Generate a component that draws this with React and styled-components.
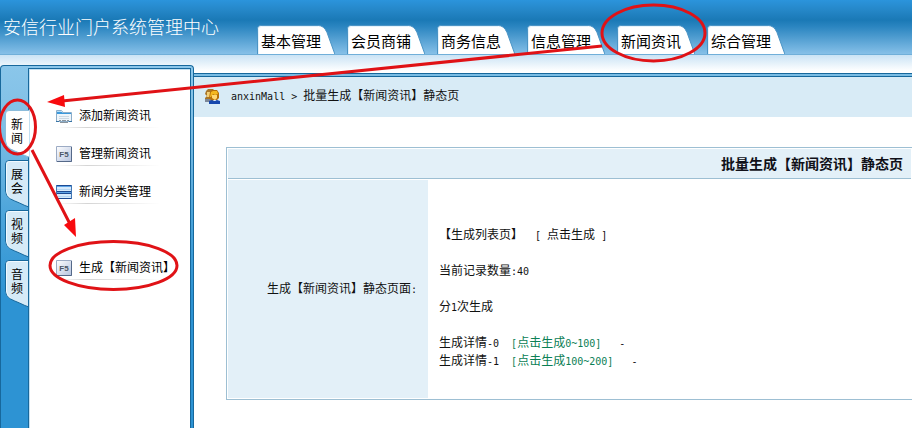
import React, { useState } from "react";
import styled, { createGlobalStyle } from "styled-components";

const GlobalStyle = createGlobalStyle`
  * {
    box-sizing: border-box;
  }
  body {
    margin: 0;
    overflow: hidden;
    background: #fff;
    color: #111;
    font: 12px/18px "Liberation Sans", "Noto Sans CJK SC", sans-serif;
  }
  button {
    margin: 0;
    padding: 0;
    border: none;
    background: none;
    color: inherit;
    font: inherit;
    cursor: pointer;
  }
  a {
    color: inherit;
    text-decoration: none;
  }
`;

const Page = styled.div`
  position: relative;
  display: flex;
  flex-direction: column;
  min-height: 100vh;
`;

const Header = styled.header`
  display: flex;
  align-items: flex-end;
  height: 55px;
  border-bottom: 1px solid #70afd9;
  background: linear-gradient(#2b94dc 0, #2587c8 10px, #1a79b6 20px, #2c86c1 27px, #86c0e8 54px);
`;

const Title = styled.h1`
  flex: none;
  width: 257px;
  margin: 0;
  padding: 0 0 12px 3px;
  color: #fff;
  font-size: 18px;
  font-weight: 300;
  line-height: 28px;
  white-space: nowrap;
`;

const TopNav = styled.nav`
  display: flex;
  gap: 12px;
`;

const TopTabButton = styled.button`
  position: relative;
  flex: none;
  width: 78px;
  height: 29px;
  padding: 4px 0 0 4px;
  color: #000;
  font-size: 15px;
  line-height: 24px;
  text-align: left;
  white-space: nowrap;
`;

const TabShape = styled.svg`
  position: absolute;
  top: 0;
  left: 0;
`;

const TabLabel = styled.span`
  position: relative;
`;

const Body = styled.div`
  display: flex;
  flex: 1;
  background: linear-gradient(#cae3f5 0, #fff 16px);
`;

const Sidebar = styled.aside`
  display: flex;
  flex: none;
  width: 194px;
  margin-top: 10px;
  padding: 2px 2px 0 0;
  border: 1px solid #17689c;
  border-bottom: none;
  border-radius: 4px 4px 0 0;
  background: linear-gradient(#8ac6ea 0, #7fbfe5 60px, #4ba4da 150px, #2d93d3 230px);
`;

const Rail = styled.div`
  display: flex;
  flex-direction: column;
  align-items: flex-end;
  gap: 2px;
  width: 27px;
  padding-top: 42px;
`;

const SideTabButton = styled.button`
  position: relative;
  z-index: ${(p) => (p.$active ? 1 : 0)};
  display: flex;
  justify-content: center;
  align-items: flex-start;
  width: 24px;
  height: 48px;
  margin-right: -1px;
  padding: 8px 6px 0 6px;
  color: #000;
  line-height: 14px;
`;

const SideLabel = styled.span`
  position: relative;
  width: 12px;
`;

const Panel = styled.div`
  position: relative;
  flex: 1;
  padding-top: 27px;
  border: 1px solid #17689c;
  border-bottom: none;
  background: #fff;
  box-shadow: inset 1px 1px #c3e0f2;
`;

const Menu = styled.ul`
  margin: 0;
  padding: 0 0 0 27px;
  list-style: none;
`;

const MenuItem = styled.li`
  height: 38px;
  margin-top: ${(p) => (p.$newGroup ? "38px" : "0")};
  background: linear-gradient(90deg, #fff, #d5d5d5 30%, #fff) 0 31px / 104px 1px no-repeat;
`;

const MenuLink = styled.a`
  display: flex;
  align-items: center;
  gap: 7px;
  height: 38px;
  padding-top: 1px;
  color: #000;
  white-space: nowrap;
`;

const Main = styled.main`
  flex: 1;
  min-width: 0;
  margin-top: 18px;
  border-top: 1px solid #17689c;
  background: #fff;
`;

const Crumbs = styled.div`
  display: flex;
  align-items: center;
  height: 43px;
  padding-left: 10px;
  border-top: 2px solid #7abce3;
  box-shadow: inset 0 1px #17689c;
  background: #d8ebf6;
  white-space: pre;
`;

const CrumbText = styled.span`
  padding-left: 10px;
`;

const Latin = styled.span`
  font-family: "DejaVu Sans Mono", monospace;
  font-size: 10px;
`;

const Table = styled.table`
  width: calc(100% - 32px);
  margin: 30px 0 0 32px;
  border: 1px solid #9dbfd3;
  border-right: none;
  border-collapse: separate;
  border-spacing: 1px;
`;

const HeadCell = styled.th`
  height: 30px;
  padding: 0 8px 0 0;
  border-bottom: 1px solid #9dbfd3;
  background: #e3f0f8;
  color: #101018;
  font-size: 14px;
  font-weight: 700;
  text-align: right;
`;

const LabelCell = styled.th`
  width: 200px;
  height: 218px;
  padding: 0 11px 0 0;
  background: #e3f0f8;
  font-weight: 400;
  text-align: right;
  white-space: nowrap;
`;

const ValueCell = styled.td`
  padding: 18px 10px 0;
  white-space: pre;
`;

const Line = styled.p`
  height: 18px;
  margin: 0 0 ${(p) => (p.$tight ? "0" : "18px")};
`;

const GreenLink = styled.a`
  color: #0b8055;
`;

const Marks = styled.svg`
  position: absolute;
  z-index: 2;
  top: 0;
  left: 0;
  pointer-events: none;
`;

const topTabs = ["基本管理", "会员商铺", "商务信息", "信息管理", "新闻资讯", "综合管理"];

const sideTabs = ["新闻", "展会", "视频", "音频"];

const menu = [
  { label: "添加新闻资讯", icon: "folder" },
  { label: "管理新闻资讯", icon: "key" },
  { label: "新闻分类管理", icon: "rows" },
  { label: "生成【新闻资讯】", icon: "key", newGroup: true },
];

const FolderIcon = () => (
  <svg width="16" height="16" viewBox="0 0 16 16" aria-hidden="true">
    <path d="M.5 13.500V2.500h5l1.500 2h8.500v9z" fill="#eef5fb" stroke="#8cadc9" />
    <path d="M1 4h5l1 1h8v1H1z" fill="#3b99dc" />
    <path d="M1 3h4v1H1z" fill="#b5def7" />
    <path d="M0 13.500h3m10 0h3" stroke="#3874a5" />
    <path d="M3 8.500h10M3 10.500h10" stroke="#ccd8e2" />
    <path d="M3 12.500h2m1 0h4m1 0h2M4 14.500h8" stroke="#8a949d" />
  </svg>
);

const KeyIcon = () => (
  <svg width="16" height="16" viewBox="0 0 16 16" aria-hidden="true">
    <defs>
      <linearGradient id="keyFace" x1="0" y1="0" x2="1" y2="1">
        <stop offset="0" stopColor="#fff" />
        <stop offset="1" stopColor="#b4c3df" />
      </linearGradient>
    </defs>
    <path d="M.5.5h15v15H.5z" fill="url(#keyFace)" stroke="#9cabc4" />
    <path d="M15.500 1v14.500H1" fill="none" stroke="#556989" />
    <text x="8" y="11" textAnchor="middle" fontFamily="Liberation Sans, sans-serif" fontSize="8" fontWeight="700" fill="#4b5666">
      F5
    </text>
  </svg>
);

const RowsIcon = () => (
  <svg width="16" height="16" viewBox="0 0 16 16" aria-hidden="true">
    <path d="M0 1h16v14H0z" fill="#d6eafc" />
    <path d="M0 1h16v2H0zM0 8h16v2H0z" fill="#5da3e6" />
    <path d="M0 1.500h16M0 7.500h16M0 9.500h16M0 14.500h16" stroke="#1c4a93" />
    <path d="M1 5.500h14M1 12.500h14" stroke="#b4d5f2" />
    <path d="M.5 1v14M15.500 1v14" stroke="#4377b4" />
  </svg>
);

const UsersIcon = () => (
  <svg width="17" height="17" viewBox="0 0 17 17" aria-hidden="true">
    <path d="M2 3 4 1h5l2 2v7l-3 4H1v-4l2-2-2-2z" fill="#a8762a" />
    <path d="M3 4h4v5H3z" fill="#f3cf76" />
    <path d="M1 11h6v3H1z" fill="#7c8798" />
    <path d="M6 4 8 2h5l2 3v5l-2 2H7L5 10z" fill="#b56f0a" />
    <path d="M7 4 9 3h4l1 3-3 1-2-1-2 3H6z" fill="#f4b820" />
    <path d="M8 7h5v3l-2 2-3-2z" fill="#ffd772" />
    <path d="M5 16v-3l3-1 2 1 3-1 3 1v3z" fill="#1748ad" />
    <path d="M10 12h2l-1 1z" fill="#fff" />
  </svg>
);

const icons = { folder: FolderIcon, key: KeyIcon, rows: RowsIcon };

const TopTab = ({ label }) => (
  <TopTabButton type="button">
    <TabShape width="78" height="29" viewBox="0 0 78 29" aria-hidden="true">
      <path d="M.5 30V4Q.5.500 4 .5h57q6 0 9 7l8 22" fill="#fff" stroke="#4b94c5" />
      <path d="M1.500 30V4q0-2.500 3-2.500H61" fill="none" stroke="#e4f2fb" />
    </TabShape>
    <TabLabel>{label}</TabLabel>
  </TopTabButton>
);

const SideTab = ({ label, active, onClick }) => (
  <SideTabButton type="button" $active={active} onClick={onClick}>
    <TabShape width="24" height="48" viewBox="0 0 24 48" aria-hidden="true">
      <path
        d="M24 .5H4Q.5.500.5 4v27q0 5 5 8 4 2 9 4 6 3 9.500 4"
        fill={active ? "#fff" : "#d5eaf7"}
        stroke={active ? "#8bbcdb" : "#17689c"}
      />
      {!active && <path d="M23 1.500H4.500q-3 0-3 3V31q0 4 4 7" fill="none" stroke="#f2faff" />}
    </TabShape>
    <SideLabel>{label}</SideLabel>
  </SideTabButton>
);

// red pen marks showing the order of the clicks
const GuideMarks = () => (
  <Marks width="912" height="428" viewBox="0 0 912 428" aria-hidden="true">
    <g fill="none" stroke="#e01216" strokeWidth="3">
      <ellipse cx="653.500" cy="33" rx="51.500" ry="28" />
      <ellipse cx="17.500" cy="127" rx="18" ry="27" />
      <ellipse cx="113.500" cy="265.500" rx="63.500" ry="24" />
      <path d="M602 46 62 101M32 150l38 74" />
    </g>
    <path d="M47 102l17-7 1 12zM76 237l-12-12 11-7z" fill="#f80a0e" />
  </Marks>
);

const App = () => {
  const [section, setSection] = useState("新闻");

  return (
    <Page>
      <GlobalStyle />
      <Header>
        <Title>安信行业门户系统管理中心</Title>
        <TopNav>
          {topTabs.map((label) => (
            <TopTab key={label} label={label} />
          ))}
        </TopNav>
      </Header>
      <Body>
        <Sidebar>
          <Rail>
            {sideTabs.map((label) => (
              <SideTab key={label} label={label} active={label === section} onClick={() => setSection(label)} />
            ))}
          </Rail>
          <Panel>
            <Menu>
              {menu.map(({ label, icon, newGroup }) => {
                const Icon = icons[icon];
                return (
                  <MenuItem key={label} $newGroup={newGroup}>
                    <MenuLink href="#">
                      <Icon />
                      {label}
                    </MenuLink>
                  </MenuItem>
                );
              })}
            </Menu>
          </Panel>
        </Sidebar>
        <Main>
          <Crumbs>
            <UsersIcon />
            <CrumbText>
              <Latin>anxinMall &gt; </Latin>批量生成【新闻资讯】静态页
            </CrumbText>
          </Crumbs>
          <Table>
            <thead>
              <tr>
                <HeadCell colSpan="2">批量生成【新闻资讯】静态页</HeadCell>
              </tr>
            </thead>
            <tbody>
              <tr>
                <LabelCell scope="row">
                  生成【新闻资讯】静态页面<Latin>:</Latin>
                </LabelCell>
                <ValueCell>
                  <Line>
                    【生成列表页】<Latin>{"  [ "}</Latin>
                    <a href="#">点击生成</a>
                    <Latin> ]</Latin>
                  </Line>
                  <Line>
                    当前记录数量<Latin>:40</Latin>
                  </Line>
                  <Line>
                    分<Latin>1</Latin>次生成
                  </Line>
                  <Line $tight>
                    生成详情<Latin>{"-0  "}</Latin>
                    <GreenLink href="#">
                      <Latin>[</Latin>点击生成<Latin>0~100]</Latin>
                    </GreenLink>
                    <Latin>{"   -"}</Latin>
                  </Line>
                  <Line $tight>
                    生成详情<Latin>{"-1  "}</Latin>
                    <GreenLink href="#">
                      <Latin>[</Latin>点击生成<Latin>100~200]</Latin>
                    </GreenLink>
                    <Latin>{"   -"}</Latin>
                  </Line>
                </ValueCell>
              </tr>
            </tbody>
          </Table>
        </Main>
      </Body>
      <GuideMarks />
    </Page>
  );
};

export default App;
